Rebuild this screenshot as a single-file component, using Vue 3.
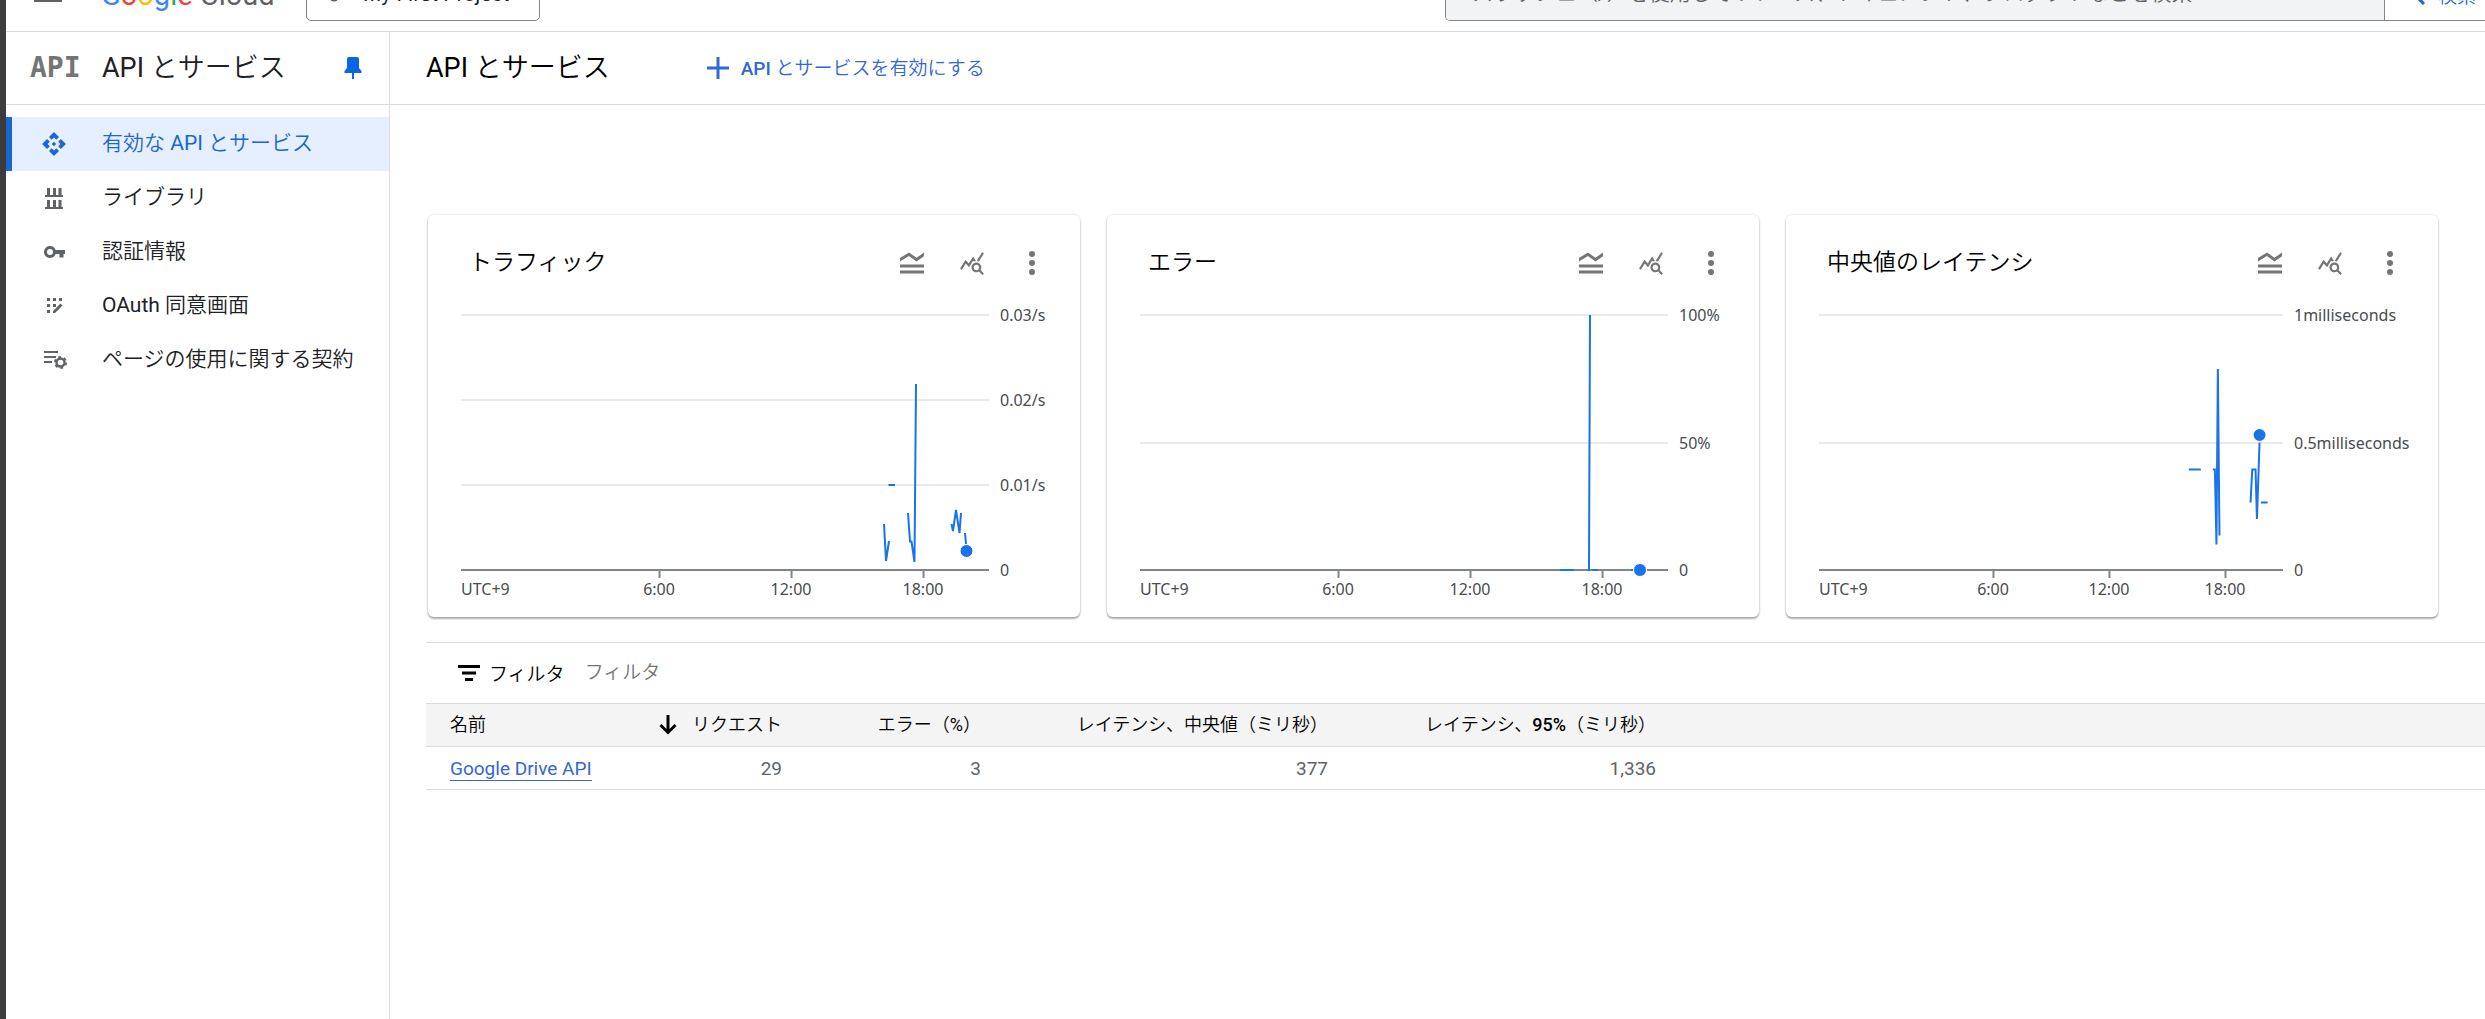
<script setup>
import { ref } from 'vue'

// ============================================================
// サイドメニュー
// ============================================================
const menu = [
  { id: 'api', label: '有効な API とサービス' },
  { id: 'library', label: 'ライブラリ' },
  { id: 'key', label: '認証情報' },
  { id: 'consent', label: 'OAuth 同意画面' },
  { id: 'terms', label: 'ページの使用に関する契約' }
]
const active = ref('api')
const filter = ref('')

// ============================================================
// グラフ（座標は width × 255 の描画領域内）
// ============================================================
const ticks = ['6:00', '12:00', '18:00']
const charts = [
  {
    title: 'トラフィック',
    width: 528,
    labelWidth: 48,
    labels: ['0.03/s', '0.02/s', '0.01/s', '0'],
    lines: [
      'M423 209L425 246L428 226',
      'M427.5 170H434',
      'M447 198L449 226.5H450.5L453.5 247L455 69',
      'M490.5 209L492 216L495 195L498.5 218L500 198',
      'M504 218L505 229'
    ],
    dot: [505.5, 236]
  },
  {
    title: 'エラー',
    width: 528,
    labelWidth: 48,
    labels: ['100%', '50%', '0'],
    lines: ['M420 255H434', 'M447.5 255H449L450 0', 'M452 255H458', 'M491 255H493'],
    dot: [500, 255]
  },
  {
    title: '中央値のレイテンシ',
    width: 463,
    labelWidth: 112,
    labels: ['1milliseconds', '0.5milliseconds', '0'],
    lines: [
      'M369 154.5H381',
      'M393 154.5H395L396.6 229.5L398 54L399.6 220.5',
      'M430.6 187.5L432.3 154.5H435.6L437 204L439.6 127.5',
      'M441 187.5H447.6'
    ],
    dot: [439.6, 120]
  }
]

// 目盛り線の y 座標
function gridY(chart, i) {
  return Math.round((255 * i) / (chart.labels.length - 1))
}

const rows = [
  { name: 'Google Drive API', requests: '29', errors: '3', median: '377', p95: '1,336' }
]
</script>

<template>
  <div class="page">
    <!-- 上部バー -->
    <header class="topbar">
      <div class="topbar-inner">
        <button class="icon-btn burger" aria-label="メニュー">
          <svg width="28" height="20" viewBox="0 0 28 20"><path d="M0 0h28v3H0zM0 8h28v3H0zM0 17h28v3H0z" /></svg>
        </button>
        <a href="#" class="logo">
          <span class="b">G</span><span class="r">o</span><span class="y">o</span><span class="b">g</span><span class="g">l</span><span class="r">e</span> Cloud
        </a>
        <button class="project">
          <svg width="26" height="26" viewBox="0 0 26 26"><circle cx="5" cy="6" r="4" /><circle cx="21" cy="6" r="4" /><circle cx="13" cy="21" r="4.500" /></svg>
          My First Project
        </button>
        <div class="search">
          <input type="text" aria-label="検索" placeholder="スラッシュ（/）を使用してリソース、ドキュメント、プロダクトなどを検索" />
          <button class="search-btn">
            <svg width="24" height="24" viewBox="0 0 24 24" fill="none" stroke="currentColor" stroke-width="3"><circle cx="9" cy="9" r="6.500" /><path d="M14 14l8 8" /></svg>
            検索
          </button>
        </div>
      </div>
    </header>

    <div class="body">
      <!-- 左ナビゲーション -->
      <aside class="side">
        <div class="side-head">
          <span class="api-mark">API</span>
          <h2>API とサービス</h2>
          <button class="icon-btn pin" aria-label="固定">
            <svg width="18" height="24" viewBox="0 0 18 24"><path d="M3 3q0-2 2-2h8q2 0 2 2v9l2.500 3v2H10v6H8v-6H.5v-2L3 12z" /></svg>
          </button>
        </div>
        <nav>
          <a v-for="item in menu" :key="item.id" href="#" class="item" :class="{ active: item.id === active }" @click.prevent="active = item.id">
            <svg v-if="item.id === 'api'" width="26" height="26" viewBox="0 0 24 24"><path d="M14 12l-2 2-2-2 2-2 2 2zm-2-6l2.120 2.120 2.500-2.500L12 1 7.380 5.620l2.500 2.500L12 6zm-6 6l2.120-2.120-2.500-2.500L1 12l4.620 4.620 2.500-2.500L6 12zm12 0l-2.120 2.120 2.500 2.500L23 12l-4.620-4.620-2.500 2.500L18 12zm-6 6l-2.120-2.120-2.500 2.500L12 23l4.620-4.620-2.500-2.500L12 18z" /></svg>
            <svg v-else-if="item.id === 'library'" width="26" height="26" viewBox="0 0 26 26"><path d="M6 3h3v7h3V3h3v7h2.500V3h3v7H22v2H4v-2h2zM6 15h3v7h3v-7h3v7h2.500v-7h3v7H22v2H4v-2h2z" /></svg>
            <svg v-else-if="item.id === 'key'" width="26" height="26" viewBox="0 0 26 26"><path fill-rule="evenodd" d="M9 7a6 6 0 0 1 5.600 4H24v4h-1.500v3.500h-4V15h-3.900A6 6 0 1 1 9 7zm0 3a3 3 0 1 0 0 6 3 3 0 0 0 0-6z" /></svg>
            <svg v-else-if="item.id === 'consent'" width="26" height="26" viewBox="0 0 26 26"><path d="M6 5h3v3H6zM12 5h3v3h-3zM18 5h3v3h-3zM6 11h3v3H6zM12 11h3v3h-3zM6 17h3v3H6zM12 18l7.500-7.500 2 2L14 20h-2z" /></svg>
            <svg v-else width="26" height="26" viewBox="0 0 26 26">
              <path d="M3 4h14v2H3zM3 9h12v2H3zM3 14h8v2H3z" />
              <circle cx="19.500" cy="15.500" r="4" fill="none" stroke="currentColor" stroke-width="2.400" />
              <circle cx="19.500" cy="15.500" r="5.600" fill="none" stroke="currentColor" stroke-width="1.800" stroke-dasharray="2.860 3" />
            </svg>
            <span>{{ item.label }}</span>
          </a>
        </nav>
      </aside>

      <!-- メイン -->
      <main class="main">
        <div class="main-head">
          <h1>API とサービス</h1>
          <button class="enable">
            <svg width="22" height="22" viewBox="0 0 22 22"><path d="M9.500 0h3v9.500H22v3h-9.500V22h-3v-9.500H0v-3h9.500z" /></svg>
            <span><b>API</b> とサービスを有効にする</span>
          </button>
        </div>

        <div class="cards">
          <section v-for="chart in charts" :key="chart.title" class="card">
            <div class="card-head">
              <h3>{{ chart.title }}</h3>
              <button class="icon-btn" aria-label="凡例">
                <svg width="36" height="36" viewBox="0 0 24 24"><path d="M20 15H4v-2h16v2zm0 2H4v2h16v-2zm-5-6l5-3.550V5l-5 3.550L10 5 4 8.660V11l5.920-3.610L15 11z" /></svg>
              </button>
              <button class="icon-btn" aria-label="データ探索">
                <svg width="26" height="26" viewBox="0 0 24 24"><path d="M19.880 18.470c.44-.7.7-1.510.7-2.390 0-2.490-2.010-4.500-4.500-4.500s-4.500 2.010-4.500 4.500 2.010 4.500 4.490 4.500c.88 0 1.700-.26 2.390-.7L21.580 23 23 21.580l-3.120-3.110zm-3.800.11c-1.380 0-2.500-1.120-2.500-2.500s1.120-2.500 2.500-2.500 2.500 1.120 2.500 2.500-1.120 2.500-2.500 2.500zm-.36-8.500c-.74.020-1.450.18-2.100.45l-.55-.83-3.800 6.180-3.010-3.520-3.630 5.810L1 17l5-8 3 3.500L13 6l2.720 4.080zm2.590.5c-.64-.28-1.330-.45-2.050-.49L21.380 2 23 3.180l-4.690 7.400z" /></svg>
              </button>
              <button class="icon-btn" aria-label="その他">
                <svg width="26" height="26" viewBox="0 0 26 26"><circle cx="13" cy="4" r="3" /><circle cx="13" cy="13" r="3" /><circle cx="13" cy="22" r="3" /></svg>
              </button>
            </div>
            <div class="chart">
              <div class="plot">
                <svg class="canvas" :viewBox="`0 0 ${chart.width} 255`" preserveAspectRatio="none">
                  <line v-for="(l, i) in chart.labels" :key="l" x1="0" :x2="chart.width" :y1="gridY(chart, i)" :y2="gridY(chart, i)" :class="i === chart.labels.length - 1 ? 'axis' : 'grid'" />
                  <line v-for="n in 3" :key="n" class="tick" :x1="chart.width * (n / 4 + 0.126)" :x2="chart.width * (n / 4 + 0.126)" y1="255" y2="263" />
                  <path v-for="d in chart.lines" :key="d" :d="d" class="series" />
                  <circle :cx="chart.dot[0]" :cy="chart.dot[1]" r="6.500" class="dot" />
                </svg>
                <div class="x-labels">
                  <span>UTC+9</span>
                  <span v-for="t in ticks" :key="t">{{ t }}</span>
                </div>
              </div>
              <div class="y-labels" :style="{ width: chart.labelWidth + 'px' }">
                <span v-for="l in chart.labels" :key="l">{{ l }}</span>
              </div>
            </div>
          </section>
        </div>

        <!-- API 一覧 -->
        <div class="list">
          <div class="filter">
            <svg width="22" height="16" viewBox="0 0 22 16"><path d="M0 0h22v3H0zM4 6.500h14v3H4zM7 13h8v3H7z" /></svg>
            <label for="filter">フィルタ</label>
            <input id="filter" v-model="filter" type="text" placeholder="フィルタ" />
          </div>
          <table>
            <colgroup>
              <col class="c-name" />
              <col class="c-req" />
              <col class="c-err" />
              <col class="c-med" />
              <col class="c-p95" />
              <col />
            </colgroup>
            <thead>
              <tr>
                <th class="left">名前</th>
                <th>
                  <button class="sort">
                    <svg width="18" height="20" viewBox="0 0 18 20"><path d="M7.500 0h3v14l5-5L17.500 11 9 19.500.5 11l2-2 5 5z" /></svg>
                    リクエスト
                  </button>
                </th>
                <th>エラー（%）</th>
                <th>レイテンシ、中央値（ミリ秒）</th>
                <th>レイテンシ、<b>95%</b>（ミリ秒）</th>
                <th></th>
              </tr>
            </thead>
            <tbody>
              <tr v-for="row in rows" :key="row.name">
                <td class="left"><a href="#">{{ row.name }}</a></td>
                <td>{{ row.requests }}</td>
                <td>{{ row.errors }}</td>
                <td>{{ row.median }}</td>
                <td>{{ row.p95 }}</td>
                <td></td>
              </tr>
            </tbody>
          </table>
        </div>
      </main>
    </div>
  </div>
</template>

<style>
body { margin: 0; background: #fff; }
</style>

<style scoped>
.page {
  box-sizing: border-box; min-height: 100vh; border-left: 6px solid #3c3c3c;
  display: flex; flex-direction: column; overflow: hidden;
  font-family: Roboto, 'Noto Sans CJK JP DemiLight', 'Noto Sans CJK JP', sans-serif; font-size: 19px; color: #202124;
}
button, input { font: inherit; color: inherit; background: none; border: none; padding: 0; margin: 0; }
button { cursor: pointer; }
h1, h2, h3 { margin: 0; font-weight: 400; white-space: nowrap; }
svg { display: block; flex: none; fill: currentColor; }
b { font-weight: 500; }
.icon-btn { display: flex; align-items: center; justify-content: center; color: #757575; }

/* 上部バー：下端だけが見える */
.topbar {
  height: 31px; overflow: hidden; border-bottom: 1px solid #dadce0;
  display: flex; align-items: flex-end;
}
.topbar-inner { flex: 1; height: 64px; display: flex; align-items: center; }
.burger { margin: 0 39px 14px 28px; color: #5f6368; }
.logo {
  width: 205px; padding-bottom: 8px; color: #5f6368; text-decoration: none;
  font-size: 29px; line-height: 32px; white-space: nowrap;
}
.logo .b { color: #4285f4; }
.logo .r { color: #ea4335; }
.logo .y { color: #fbbc04; }
.logo .g { color: #34a853; }
.project {
  box-sizing: border-box; width: 234px; height: 43px; padding: 0 0 10px 14px;
  display: flex; align-items: center; gap: 16px; white-space: nowrap;
  border: 1px solid #80868b; border-radius: 5px; font-size: 21px;
}
.project svg { color: #5f6368; margin-bottom: 10px; }
.search {
  box-sizing: border-box; flex: 1; height: 43px; margin-left: 905px; display: flex;
  border: 1px solid #80868b; border-right: none; border-radius: 5px 0 0 5px; overflow: hidden;
}
.search input { flex: 1; min-width: 0; padding: 0 26px 12px; background: #f1f3f4; font-size: 21px; }
.search input::placeholder { color: #5f6368; opacity: 1; }
.search-btn {
  box-sizing: border-box; width: 101px; padding: 0 0 10px 17px; border-left: 1px solid #80868b;
  display: flex; align-items: center; gap: 12px; white-space: nowrap; color: #1967d2; font-size: 19px;
}

.body { flex: 1; display: flex; }

/* 左ナビゲーション */
.side { box-sizing: border-box; width: 384px; flex: none; border-right: 1px solid #dadce0; }
.side-head {
  height: 72px; display: flex; align-items: center; padding: 0 27px 0 24px;
  border-bottom: 1px solid #dadce0;
}
.api-mark { width: 72px; font: bold 28px/32px 'DejaVu Sans Mono', monospace; color: #757575; }
.side-head h2 { flex: 1; font-size: 27px; line-height: 36px; }
.pin { color: #0b66e4; }
nav { padding-top: 12px; }
.item {
  height: 54px; display: flex; align-items: center; gap: 35px; padding-left: 29px;
  border-left: 6px solid transparent; font-size: 21px; line-height: 28px;
  color: #202124; text-decoration: none; white-space: nowrap;
}
.item svg { color: #5f6368; }
.item span { padding-bottom: 2px; }
.item.active { background: #e6efff; border-left-color: #1967d2; color: #1967d2; }
.item.active svg { color: #1967d2; }

/* メイン */
.main { flex: 1; min-width: 0; color: #000; }
.main-head {
  height: 72px; display: flex; align-items: center; gap: 97px; padding-left: 36px;
  border-bottom: 1px solid #dadce0;
}
.main-head h1 { font-size: 27px; line-height: 36px; }
.enable { display: flex; align-items: center; gap: 12px; color: #3367d6; white-space: nowrap; }
.enable span { padding-bottom: 4px; }

/* グラフカード */
.cards {
  display: grid; grid-template-columns: repeat(3, 1fr); gap: 27px;
  padding: 110px 47px 0 38px;
}
.card {
  box-sizing: border-box; min-width: 0; height: 402px; padding: 17px 32px 0 33px; background: #fff; border-radius: 6px;
  box-shadow: 0 2px 2px rgba(0, 0, 0, 0.3), 0 0 3px rgba(0, 0, 0, 0.16);
}
.card-head { height: 61px; display: flex; align-items: center; padding-left: 8px; margin-right: -14px; }
.card-head h3 { flex: 1; font-size: 23px; line-height: 30px; }
.card-head .icon-btn { width: 60px; height: 60px; }
.chart { display: flex; gap: 11px; padding-top: 22px; }
.plot { flex: 1; min-width: 0; }
.canvas { width: 100%; height: 255px; overflow: visible; }
.canvas line, .canvas path { vector-effect: non-scaling-stroke; fill: none; }
.canvas .grid { stroke: #e8eaed; stroke-width: 2; }
.canvas .axis { stroke: #80868b; stroke-width: 2; }
.canvas .tick { stroke: #80868b; stroke-width: 2; }
.canvas .series { stroke: #1a73e8; stroke-width: 2; }
.canvas .dot { fill: #1a73e8; stroke: #fff; stroke-width: 1; }
.x-labels, .y-labels { font: 16px/20px 'Noto Sans', sans-serif; color: #494c50; white-space: nowrap; }
.x-labels { display: grid; grid-template-columns: repeat(4, 1fr); padding-top: 9px; text-align: center; }
.x-labels span:first-child { text-align: left; }
.y-labels { height: 275px; margin-top: -10px; display: flex; flex-direction: column; justify-content: space-between; }

/* API 一覧 */
.list { margin: 25px 0 0 36px; border-top: 1px solid #dadce0; }
.filter { height: 60px; display: flex; align-items: center; padding-left: 32px; gap: 9px; }
.filter label, .filter input { padding-bottom: 2px; }
.filter input { flex: 1; margin-left: 11px; height: 30px; }
.filter input::placeholder { color: #757575; opacity: 1; }
table { width: 100%; table-layout: fixed; border-collapse: collapse; }
.c-name { width: 214px; }
.c-req { width: 162px; }
.c-err { width: 199px; }
.c-med { width: 347px; }
.c-p95 { width: 328px; }
th, td {
  height: 42px; padding: 0 20px; text-align: right; white-space: nowrap;
  line-height: 24px; border-bottom: 1px solid #dadce0;
}
th { font-size: 18px; font-weight: 400; background: #f4f4f4; border-top: 1px solid #dadce0; }
td { color: #5f6368; padding-top: 1px; height: 41px; }
.left { text-align: left; padding-left: 24px; }
.sort { display: flex; align-items: center; gap: 15px; width: 100%; justify-content: flex-end; }
td a { color: #3367d6; text-decoration: none; border-bottom: 1px solid #3367d6; }
</style>
